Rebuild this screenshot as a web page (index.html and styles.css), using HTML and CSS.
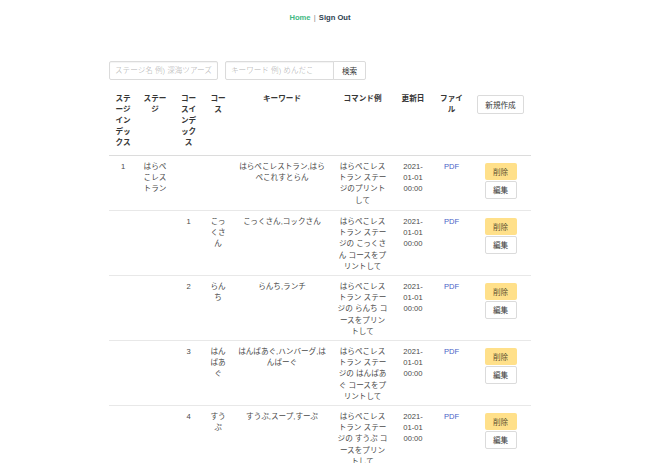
FILE: index.html
```html
<!DOCTYPE html>
<html lang="ja">
<head>
    <meta charset="UTF-8">
    <meta name="viewport" content="width=device-width, initial-scale=1.0">
    <title>ステージ一覧</title>
    <link rel="stylesheet" href="styles.css">
</head>
<body>
    <div class="app">
        <nav class="nav">
            <a class="nav-link active" href="#">Home</a>
            <span class="nav-sep">|</span>
            <a class="nav-link" href="#">Sign Out</a>
        </nav>

        <div class="container">
            <form class="search">
                <input class="input" type="text" placeholder="ステージ名 例) 深海ツアーズ">
                <div class="addons">
                    <input class="input" type="text" placeholder="キーワード 例) めんだこ">
                    <button class="button" type="button">検索</button>
                </div>
            </form>

            <table class="table">
                <colgroup>
                    <col style="width: 28px">
                    <col style="width: 36px">
                    <col style="width: 31px">
                    <col style="width: 28px">
                    <col style="width: 100px">
                    <col style="width: 61px">
                    <col style="width: 40px">
                    <col style="width: 37px">
                    <col style="width: 61px">
                </colgroup>
                <thead>
                    <tr>
                        <th>ステージインデックス</th>
                        <th>ステージ</th>
                        <th>コースインデックス</th>
                        <th>コース</th>
                        <th>キーワード</th>
                        <th>コマンド例</th>
                        <th class="date">更新日</th>
                        <th>ファイル</th>
                        <th><button class="button new-btn" type="button">新規作成</button></th>
                    </tr>
                </thead>
                <tbody>
                    <tr>
                        <td>1</td>
                        <td>はらぺこレストラン</td>
                        <td></td>
                        <td></td>
                        <td>はらぺこレストラン,はらぺこれすとらん</td>
                        <td class="command">はらぺこレストラン ステージのプリントして</td>
                        <td class="date">2021-01-01 00:00</td>
                        <td><a class="file-link" href="#">PDF</a></td>
                        <td>
                            <div class="actions">
                                <button class="button is-warning" type="button">削除</button>
                                <button class="button" type="button">編集</button>
                            </div>
                        </td>
                    </tr>
                    <tr>
                        <td></td>
                        <td></td>
                        <td>1</td>
                        <td>こっくさん</td>
                        <td>こっくさん,コックさん</td>
                        <td class="command">はらぺこレストラン ステージの こっくさん コースをプリントして</td>
                        <td class="date">2021-01-01 00:00</td>
                        <td><a class="file-link" href="#">PDF</a></td>
                        <td>
                            <div class="actions">
                                <button class="button is-warning" type="button">削除</button>
                                <button class="button" type="button">編集</button>
                            </div>
                        </td>
                    </tr>
                    <tr>
                        <td></td>
                        <td></td>
                        <td>2</td>
                        <td>らんち</td>
                        <td>らんち,ランチ</td>
                        <td class="command">はらぺこレストラン ステージの らんち コースをプリントして</td>
                        <td class="date">2021-01-01 00:00</td>
                        <td><a class="file-link" href="#">PDF</a></td>
                        <td>
                            <div class="actions">
                                <button class="button is-warning" type="button">削除</button>
                                <button class="button" type="button">編集</button>
                            </div>
                        </td>
                    </tr>
                    <tr>
                        <td></td>
                        <td></td>
                        <td>3</td>
                        <td>はんばあぐ</td>
                        <td>はんばあぐ,ハンバーグ,はんばーぐ</td>
                        <td class="command">はらぺこレストラン ステージの はんばあぐ コースをプリントして</td>
                        <td class="date">2021-01-01 00:00</td>
                        <td><a class="file-link" href="#">PDF</a></td>
                        <td>
                            <div class="actions">
                                <button class="button is-warning" type="button">削除</button>
                                <button class="button" type="button">編集</button>
                            </div>
                        </td>
                    </tr>
                    <tr>
                        <td></td>
                        <td></td>
                        <td>4</td>
                        <td>すうぷ</td>
                        <td>すうぷ,スープ,すーぷ</td>
                        <td class="command">はらぺこレストラン ステージの すうぷ コースをプリントして</td>
                        <td class="date">2021-01-01 00:00</td>
                        <td><a class="file-link" href="#">PDF</a></td>
                        <td>
                            <div class="actions">
                                <button class="button is-warning" type="button">削除</button>
                                <button class="button" type="button">編集</button>
                            </div>
                        </td>
                    </tr>
                </tbody>
            </table>
        </div>
    </div>
</body>
</html>
```

FILE: styles.css
```css
* {
    box-sizing: border-box;
    margin: 0;
    padding: 0;
}

body {
    font-family: 'Liberation Sans', 'Noto Sans CJK JP', sans-serif;
    font-size: 7.6px;
    line-height: 11.4px;
    color: #4a4a4a;
    background-color: white;
    overflow: hidden;
}

.app {
    width: 640px;
}

.nav {
    padding-top: 11.6px;
    text-align: center;
    font-weight: bold;
}

.nav-link {
    color: #2c3e50;
    text-decoration: none;
}

.nav-link.active {
    color: #42b983;
}

.nav-sep {
    color: #8a8a8a;
    font-weight: normal;
    margin: 0 1px;
}

.container {
    width: 422px;
    margin: 0 auto;
}

.search {
    display: flex;
    gap: 7px;
    margin-top: 38px;
    margin-bottom: 9px;
}

.addons {
    display: flex;
}

.input {
    width: 109px;
    height: 19px;
    padding: 0 5px;
    font-family: inherit;
    font-size: 7.6px;
    color: #363636;
    border: 1px solid #dbdbdb;
    border-radius: 2px;
    box-shadow: inset 0 1px 1px rgba(10, 10, 10, 0.05);
    outline: none;
}

.input::placeholder {
    color: rgba(54, 54, 54, 0.3);
}

.addons .input {
    border-radius: 2px 0 0 2px;
    margin-right: -1px;
}

.addons .button {
    border-radius: 0 2px 2px 0;
    width: 33px;
    height: 19px;
}

.button {
    display: inline-flex;
    align-items: center;
    justify-content: center;
    height: 18px;
    padding: 0 7px;
    font-family: inherit;
    font-size: 7.6px;
    color: #363636;
    background-color: white;
    border: 1px solid #dbdbdb;
    border-radius: 2px;
    cursor: pointer;
}

.button.is-warning {
    background-color: #ffe08a;
    border-color: transparent;
    color: rgba(0, 0, 0, 0.7);
}

.table {
    width: 422px;
    table-layout: fixed;
    border-collapse: collapse;
}

.table th,
.table td {
    text-align: center;
    vertical-align: top;
    word-break: break-all;
    line-break: anywhere;
}

.table th {
    padding: 4px 5px 7px;
    line-height: 11px;
    color: #363636;
    font-weight: bold;
    border-bottom: 1px solid #dcdcdc;
}

.table td {
    padding: 4.5px 5px 2.5px;
    line-height: 11.4px;
    border-bottom: 1px solid #e8e8e8;
}

.table .command {
    word-break: normal;
    line-break: auto;
}

.table .date {
    padding-left: 8.5px;
    padding-right: 8.5px;
}

.new-btn {
    height: 19px;
    margin-top: 2px;
}

.file-link {
    color: #485fc7;
    text-decoration: none;
}

.actions {
    display: flex;
    flex-direction: column;
    align-items: center;
    gap: 1px;
    margin: 2px 0 9px;
}

.actions .button {
    width: 32px;
    height: 17.5px;
}
```
